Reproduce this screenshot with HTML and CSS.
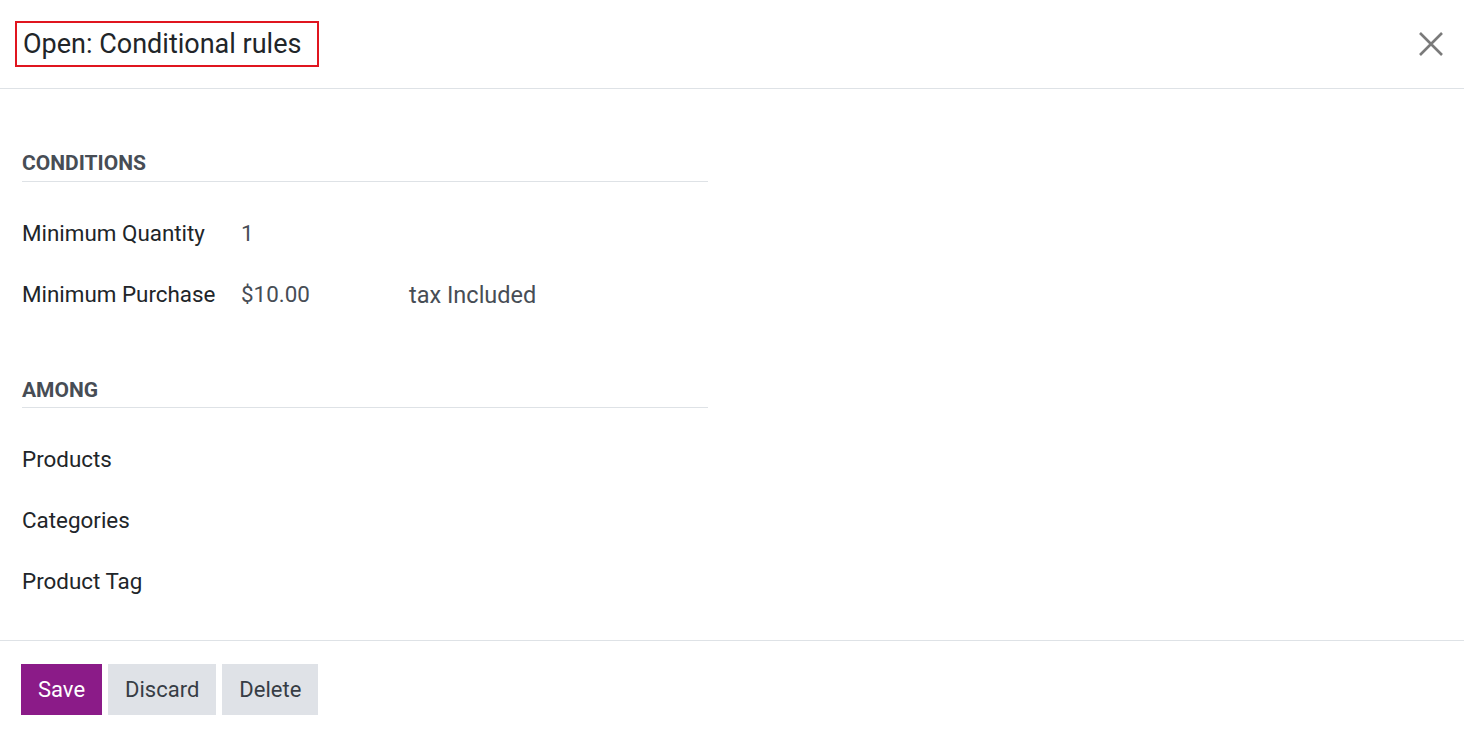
FILE: index.html
```html
<!DOCTYPE html>
<html lang="en">
<head>
<meta charset="utf-8">
<title>Open: Conditional rules</title>
<link rel="stylesheet" href="styles.css">
</head>
<body>
<div class="modal">
  <header class="modal-header">
    <h4 class="modal-title"><span class="title-box">Open: Conditional rules</span></h4>
    <button class="close-btn" aria-label="Close">
      <svg width="24" height="24" viewBox="0 0 24 24"><path d="M1 1 L23 23 M23 1 L1 23" stroke="#7a7a7a" stroke-width="2.6" fill="none"/></svg>
    </button>
  </header>
  <main class="modal-body">
    <div class="group">
      <div class="group-title">CONDITIONS</div>
      <div class="row"><div class="label">Minimum Quantity</div><div class="value">1</div></div>
      <div class="row"><div class="label">Minimum Purchase</div><div class="value amount">$10.00</div><div class="value tax">tax Included</div></div>
    </div>
    <div class="group group-second">
      <div class="group-title">AMONG</div>
      <div class="row"><div class="label">Products</div></div>
      <div class="row"><div class="label">Categories</div></div>
      <div class="row"><div class="label">Product Tag</div></div>
    </div>
  </main>
  <footer class="modal-footer">
    <button class="btn btn-primary">Save</button>
    <button class="btn btn-secondary">Discard</button>
    <button class="btn btn-secondary">Delete</button>
  </footer>
</div>
</body>
</html>
```

FILE: styles.css
```css
* { box-sizing: border-box; }
html, body { margin: 0; padding: 0; background: #fff; }
body { font-family: Roboto, "Noto Sans", "Liberation Sans", sans-serif; color: #212529; }

.modal { width: 1464px; height: 734px; }

.modal-header {
  height: 89px;
  border-bottom: 1px solid #dee2e6;
  display: flex;
  align-items: flex-start;
  justify-content: space-between;
  padding: 21px 21px 0 15px;
}
.modal-title { margin: 0; font-weight: 400; font-size: 27px; line-height: 42px; color: #212529; }
.title-box {
  display: inline-block;
  border: 2px solid #e0151f;
  padding: 0 16px 0 6px;
  height: 46px;
  line-height: 42px;
}
.close-btn {
  background: none; border: 0; padding: 0; margin-top: 11px;
  width: 24px; height: 24px; cursor: pointer; display: block;
}
.close-btn svg { display: block; }

.modal-body { padding: 62px 0 0 22px; height: 552px; border-bottom: 1px solid #dee2e6; }
.group { width: 686px; }
.group-second { margin-top: 54px; }
.group-title {
  font-size: 21px; font-weight: 700; line-height: 24px; color: #474d55;
  padding-bottom: 5px; border-bottom: 1px solid #dee2e6; margin-bottom: 20px;
}
.group:first-child .group-title { padding-bottom: 6px; }
.row { display: flex; align-items: center; height: 61px; font-size: 22.4px; }
.label { width: 219px; color: #212529; }
.value { color: #474d55; }
.amount { width: 168px; }
.tax { font-size: 23.5px; padding-top: 2px; }

.modal-footer { display: flex; gap: 6px; padding: 23px 0 0 21px; }
.btn {
  border: 0; height: 51px; font-family: inherit; font-size: 22px;
  padding: 0 17px; cursor: pointer; border-radius: 0;
}
.btn-primary { background: #8b1b88; color: #fff; }
.btn-secondary { background: #dfe2e7; color: #373d45; }
```
